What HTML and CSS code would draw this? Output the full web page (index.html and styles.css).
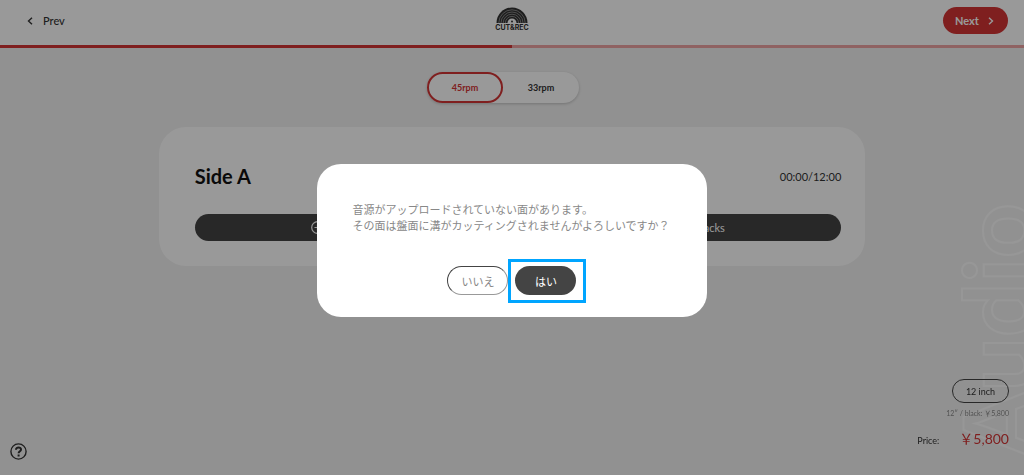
FILE: index.html
```html
<!DOCTYPE html>
<html lang="ja">
<head>
    <meta charset="UTF-8">
    <meta name="viewport" content="width=device-width, initial-scale=1">
    <title>CUT&amp;REC - Audio</title>
    <link rel="stylesheet" href="styles.css">
</head>
<body>
<header class="header">
    <a href="#" class="prev">
        <svg width="6" height="8" viewBox="0 0 6 8"><path d="M5 .7 1.5 4 5 7.3" fill="none" stroke="currentColor" stroke-width="1.4"/></svg>
        Prev
    </a>
    <a href="#" class="logo" aria-label="CUT&amp;REC">
        <svg width="32" height="16" viewBox="0 0 32 16">
            <path d="M0.500 16a15.500 15.500 0 0 1 31 0z" fill="#333"/>
            <g fill="none" stroke="#bbb" stroke-width=".6">
                <circle cx="16" cy="16" r="13.2"/>
                <circle cx="16" cy="16" r="11"/>
                <circle cx="16" cy="16" r="8.8"/>
                <circle cx="16" cy="16" r="6.6"/>
            </g>
            <path d="M11.500 16a4.500 4.500 0 0 1 9 0z" fill="#fff"/>
            <circle cx="16" cy="14.5" r="1" fill="#333"/>
        </svg>
        <span>CUT&amp;REC</span>
    </a>
    <button type="button" class="next">
        Next
        <svg width="6" height="8" viewBox="0 0 6 8"><path d="M1 .7 4.5 4 1 7.3" fill="none" stroke="currentColor" stroke-width="1.4"/></svg>
    </button>
</header>
<div class="progress"><div class="progress-bar"></div></div>

<main class="main">
    <div class="watermark" aria-hidden="true">Audio</div>

    <div class="speed">
        <button type="button" class="active">45rpm</button>
        <button type="button">33rpm</button>
    </div>

    <section class="card">
        <div class="card-head">
            <h2>Side A</h2>
            <span class="time">00:00/12:00</span>
        </div>
        <button type="button" class="add">
            <span class="add-inner">
                <svg width="13" height="13" viewBox="0 0 13 13" fill="none" stroke="currentColor" stroke-width="1.2"><circle cx="6.5" cy="6.5" r="5.8"/><path d="M6.5 3.5v6M3.5 6.5h6"/></svg>
                Add tracks
            </span>
        </button>
    </section>
</main>

<button type="button" class="help" aria-label="Help">
    <svg width="17" height="17" viewBox="0 0 17 17" fill="none" stroke="#333"><circle cx="8.5" cy="8.5" r="7.6" stroke-width="1.4"/><path d="M6 6.7C6 3.6 11.2 3.7 11 6.7 10.9 8.3 8.6 8.3 8.6 10.3" stroke-width="2"/><path d="M8.6 11.5v2" stroke-width="2"/></svg>
</button>

<aside class="summary">
    <button type="button" class="size">12 inch</button>
    <div class="detail">12″ / black: ￥5,800</div>
    <div class="price"><span>Price:</span><strong>￥5,800</strong></div>
</aside>

<div class="overlay">
    <div class="modal" role="dialog" aria-modal="true">
        <p>音源がアップロードされていない面があります。<br>その面は盤面に溝がカッティングされませんがよろしいですか？</p>
        <div class="modal-buttons">
            <button type="button" class="no">いいえ</button>
            <button type="button" class="yes">はい</button>
        </div>
    </div>
</div>
</body>
</html>
```

FILE: styles.css
```css
* { box-sizing: border-box; }
body { margin: 0; min-height: 100vh; background: #f2f2f2; color: #333; font-family: Lato, "Noto Sans CJK JP", sans-serif; font-size: 9px; overflow-x: hidden; }
button { font-family: inherit; font-size: inherit; color: inherit; cursor: pointer; }
svg { display: block; }

.header { height: 45px; padding: 0 16px 4px; background: #fff; display: grid; grid-template-columns: 1fr auto 1fr; align-items: center; }
.prev { display: flex; align-items: center; gap: 10px; padding-left: 11px; color: #333; font-size: 11px; font-weight: 500; text-decoration: none; }
.logo { display: flex; flex-direction: column; align-items: center; gap: 1px; padding-bottom: 4px; color: #333; font-family: Inter, sans-serif; font-size: 7px; line-height: 7px; font-weight: bold; text-decoration: none; }
.next { justify-self: end; display: flex; align-items: center; justify-content: space-between; width: 65px; height: 27px; padding: 0 14px 0 12px; border: none; border-radius: 14px; background: #d43535; color: #fff; font-size: 11px; font-weight: bold; }
.progress { height: 3px; background: #efa3a3; }
.progress-bar { width: 50%; height: 100%; background: #d43535; }

.main { padding-top: 24px; }
.speed { display: flex; width: 152px; height: 31px; margin: 0 auto 24px; position: relative; left: -9px; border-radius: 16px; background: #fff; box-shadow: 0 1px 3px rgba(0,0,0,0.2); }
.speed button { flex: 1; padding: 0; border: 2px solid transparent; border-radius: 16px; background: none; font-weight: bold; }
.speed .active { border-color: #d43535; color: #d43535; }

.card { width: 69%; margin: 0 auto; padding: 36px 24px 25px 36px; border-radius: 27px; background: #fff; }
.card-head { display: flex; align-items: center; justify-content: space-between; height: 26px; margin-bottom: 25px; }
.card h2 { margin: 0; color: #111; font-size: 20px; }
.time { font-size: 11px; }
.add { display: flex; align-items: center; justify-content: center; width: 100%; height: 27px; padding: 0; border: none; border-radius: 14px; background: #444; color: #fff; font-size: 11px; }
.add-inner { display: flex; align-items: center; justify-content: space-between; width: 64%; }

.watermark { position: absolute; right: -20px; bottom: 18px; writing-mode: vertical-rl; transform: rotate(180deg); color: transparent; font-size: 96px; line-height: 96px; font-weight: bold; -webkit-text-stroke: 2px #fcfcfc; }

.help { position: fixed; left: 10px; bottom: 15px; padding: 0; border: none; background: none; }
.summary { position: fixed; right: 15px; bottom: 24px; display: flex; flex-direction: column; align-items: flex-end; }
.size { width: 57px; height: 24px; padding: 0; border: 1px solid #444; border-radius: 12px; background: none; }
.detail { margin: 4px 0 10px; color: #888; font-size: 7px; line-height: 12px; }
.price { display: flex; align-items: baseline; gap: 20px; line-height: 20px; }
.price strong { color: #d43535; font-size: 14px; font-weight: normal; }

.overlay { position: fixed; inset: 0; display: flex; align-items: center; justify-content: center; padding-top: 6px; background: rgba(0,0,0,0.4); }
.modal { width: 38%; min-width: 388px; padding: 38px 35px 22px; border-radius: 24px; background: #fff; }
.modal p { margin: 0 0 32px; color: #888; font-size: 11px; line-height: 16px; white-space: nowrap; }
.modal-buttons { display: flex; justify-content: center; gap: 7px; }
.modal-buttons button { position: relative; width: 61px; height: 29px; padding: 0; border-radius: 15px; font-size: 11px; }
.modal .no { border: 1px solid; border-color: #444 #999 #999 #444; background: #fff; color: #888; }
.modal .yes { border: none; background: #444; color: #fff; }
.yes::after { content: ""; position: absolute; inset: -7px -10px -8px -7px; border: 3px solid #00a5ff; }
```
